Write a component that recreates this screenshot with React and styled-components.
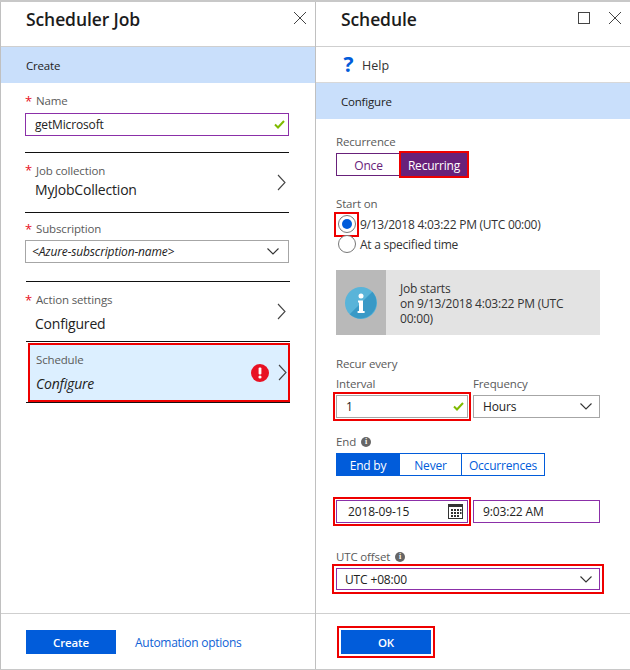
import React from "react";
import styled, { createGlobalStyle } from "styled-components";

const Global = createGlobalStyle`
  html, body { margin: 0; padding: 0; background: #fff; }
  * { box-sizing: border-box; }
  body { font-family: "Open Sans", "Noto Sans", sans-serif; color: #222; }
`;

const Blade = styled.div`
  width: 630px; height: 670px; display: flex; background: #fff;
  border-top: 2px solid #c8c8c8; border-bottom: 1px solid #c8c8c8;
`;
const Panel = styled.section`
  width: 315px; height: 667px; display: flex; flex-direction: column;
  border-left: 1px solid #c0c0c0;
`;
const Header = styled.header`
  height: 45px; flex: none; display: flex; align-items: flex-start; justify-content: space-between;
  border-bottom: 1px solid #cfcfcf; padding: 6px 8px 0 25px;
`;
const Title = styled.h1`
  margin: 0; font-size: 17.5px; line-height: 22px; font-weight: 600; color: #1c1c1c; letter-spacing: -0.1px;
`;
const WindowButtons = styled.div`
  display: flex; gap: 18px; padding-top: 3px; align-items: center;
`;
const CommandBar = styled.div`
  height: 36px; flex: none; display: flex; align-items: center; gap: 8px; padding: 1px 0 0 27px;
  border-bottom: 1px solid #d8d8d8; font-size: 12.5px; color: #333;
`;
const Band = styled.div`
  height: 36px; flex: none; display: flex; align-items: center; padding-left: 25px;
  background: #c9dffb; font-size: 11.5px; letter-spacing: -0.2px; color: #222;
`;
const Body = styled.div`
  flex: 1; padding: ${p => p.$top}px 0 0 ${p => p.$left}px; display: flex; flex-direction: column;
`;
const Footer = styled.footer`
  height: 54px; flex: none; border-top: 1px solid #cfcfcf; display: flex; align-items: center;
  gap: 19px; padding: 2px 0 0 25px; margin-bottom: 2px;
`;

const Label = styled.div`
  height: 16px; font-size: 11.5px; line-height: 16px; color: #5a5a5a; letter-spacing: -0.15px;
  display: flex; align-items: center; white-space: nowrap;
  margin-top: ${p => p.$mt || 0}px;
`;
const Star = styled.span`
  color: #e81123; width: 11px; font-size: 13px; line-height: 16px; flex: none; margin-top: -1px;
`;
const Input = styled.div`
  height: ${p => p.$h || 23}px; width: ${p => p.$w}px; flex: none; display: flex; align-items: center;
  justify-content: space-between; background: #fff;
  border: 1px solid ${p => (p.$purple ? "#8b2fa8" : "#a6a6a6")};
  padding: 0 ${p => p.$pr ?? 3}px 0 ${p => p.$pl ?? 9}px;
  font-size: 12px; letter-spacing: -0.15px; color: #222; white-space: nowrap;
  font-style: ${p => (p.$italic ? "italic" : "normal")};
  margin-top: ${p => p.$mt || 0}px;
  ${p => p.$flag && `outline: 2px solid #ee0000; outline-offset: ${p.$offset ?? 1}px;`}
`;
const Rule = styled.div`
  height: 1px; background: #111; width: 264px; margin-top: ${p => p.$mt}px; flex: none;
  margin-left: ${p => p.$ml || 0}px;
`;
const NavRow = styled.div`
  width: 264px; height: ${p => p.$h}px; flex: none; display: flex; align-items: center; justify-content: space-between;
  padding: 0 3px 0 0;
`;
const NavText = styled.div`
  display: flex; flex-direction: column; gap: ${p => p.$gap}px; margin-top: ${p => p.$mt || 0}px;
`;
const Value = styled.div`
  font-size: 14px; line-height: 18px; color: #222; padding-left: 10px; letter-spacing: -0.2px;
  font-style: ${p => (p.$italic ? "italic" : "normal")};
`;
const ScheduleValue = styled(Value)`
  padding-left: 0;
`;
const ScheduleRow = styled.div`
  width: 262px; height: 59px; margin: 1px 0 0 3px; flex: none; background: #dcefff;
  border: 2px solid #ee0000; display: flex; align-items: center; justify-content: space-between;
  padding: 0 1px 0 6px;
`;
const RowIcons = styled.div`
  display: flex; align-items: center; gap: 9px;
`;
const Primary = styled.button`
  width: 90px; height: 24px; border: 0; background: #015cda; color: #fff; padding: 2px 0 0;
  font: 600 11.5px "Open Sans", sans-serif; letter-spacing: -0.1px; flex: none;
  ${p => p.$flag && `outline: 2px solid #ee0000; outline-offset: 2px;`}
`;
const LinkText = styled.a`
  font-size: 12px; color: #0f62d6; letter-spacing: -0.27px; padding-top: 1px;
`;
const Segments = styled.div`
  display: flex; margin-top: ${p => p.$mt || 0}px; flex: none;
`;
const Segment = styled.div`
  width: ${p => p.$w}px; height: 23px; display: flex; align-items: center; justify-content: center;
  font-size: 12px; letter-spacing: -0.2px; flex: none; padding-top: 1px;
  border: 1px solid ${p => p.$color};
  margin-left: ${p => (p.$join ? -1 : 0)}px;
  background: ${p => (p.$on ? p.$color : "#fff")};
  color: ${p => (p.$on ? "#fff" : p.$color)};
  ${p => p.$flag && `outline: 2px solid #ee0000;`}
`;
const RadioRow = styled.div`
  height: 20px; display: flex; align-items: center; gap: 4px; font-size: 12px; letter-spacing: -0.25px;
  color: #333; white-space: nowrap; padding-left: 1px; flex: none;
  margin-top: ${p => p.$mt || 0}px;
`;
const RadioCell = styled.span`
  width: 19px; height: 19px; display: flex; align-items: center; justify-content: center; flex: none;
  ${p => p.$flag && `outline: 2px solid #ee0000; outline-offset: 1px;`}
`;
const Radio = styled.span`
  width: 18px; height: 18px; border-radius: 50%; border: 1px solid #777; background: #fff;
  display: flex; align-items: center; justify-content: center; flex: none;
`;
const RadioDot = styled.span`
  width: 10px; height: 10px; border-radius: 50%; background: #015cda;
`;
const InfoBox = styled.div`
  width: 264px; height: 65px; margin-top: 16px; background: #e3e3e3; display: flex; flex: none;
`;
const InfoSide = styled.div`
  width: 50px; background: #b9b9b9; display: flex; align-items: center; justify-content: center; flex: none;
`;
const InfoText = styled.div`
  padding: 11px 0 0 14px; width: 200px; font-size: 12px; line-height: 15px; letter-spacing: -0.2px; color: #333;
`;
const Two = styled.div`
  display: flex; gap: 5px; margin-top: ${p => p.$mt || 0}px; flex: none;
`;
const Col = styled.div`
  display: flex; flex-direction: column; gap: 3px;
`;
const Dot = styled.span`
  width: 10px; height: 10px; border-radius: 50%; background: #666; color: #fff; margin-left: 5px;
  font: 700 8px/10px "Liberation Serif", serif; text-align: center; flex: none; letter-spacing: 0;
`;
const Question = styled.span`
  color: #015cda; font-size: 21px; font-weight: 700; line-height: 22px; width: 11px; text-align: center; margin-top: -2px;
`;

const Close = () => (
  <svg width="14" height="14" viewBox="0 0 14 14" fill="none" stroke="#444" strokeWidth="1"><path d="M1 1l12 12M13 1L1 13" /></svg>
);
const Square = () => (
  <svg width="12" height="12" viewBox="0 0 12 12" fill="none" stroke="#444" strokeWidth="1"><rect x=".5" y=".5" width="11" height="11" /></svg>
);
const Check = () => (
  <svg width="11" height="9" viewBox="0 0 11 9" fill="none" stroke="#7fba00" strokeWidth="2"><path d="M1 4.500l3 3 6-6.500" /></svg>
);
const ChevronRight = () => (
  <svg width="9" height="17" viewBox="0 0 9 17" fill="none" stroke="#444" strokeWidth="1.1"><path d="M1 1l7 7.500L1 16" /></svg>
);
const ChevronDown = ({ mr = 5 }) => (
  <svg width="12" height="7" viewBox="0 0 12 7" fill="none" stroke="#333" strokeWidth="1.1" style={{ marginRight: mr }}><path d="M.5.5L6 6 11.5.5" /></svg>
);
const ErrorIcon = () => (
  <svg width="18" height="18" viewBox="0 0 18 18"><circle cx="9" cy="9" r="9" fill="#e81123" /><rect x="7.600" y="3.500" width="2.800" height="7" rx="1" fill="#fff" /><circle cx="9" cy="13" r="1.600" fill="#fff" /></svg>
);
const InfoIcon = () => (
  <svg width="32" height="32" viewBox="0 0 32 32">
    <circle cx="16" cy="16" r="16" fill="#59b4d9" />
    <path d="M27.300 4.700A16 16 0 0 1 4.700 27.300z" fill="#3999c6" />
    <circle cx="16" cy="9" r="2.500" fill="#fff" />
    <path d="M13 13.500h5V24h1.600v2h-7v-2H14v-8.500h-1z" fill="#fff" />
  </svg>
);
const Calendar = () => (
  <svg width="15" height="15" viewBox="0 0 15 15">
    <rect x=".5" y=".5" width="14" height="14" fill="#fff" stroke="#333" />
    <rect x="0" y="0" width="15" height="3" fill="#333" />
    <path d="M3 5h2v2H3zM6 5h2v2H6zM9 5h2v2H9zM12 5h1.500v2H12zM3 8h2v2H3zM6 8h2v2H6zM9 8h2v2H9zM12 8h1.500v2H12zM3 11h2v2H3zM6 11h2v2H6zM9 11h2v2H9z" fill="#333" />
  </svg>
);

export default function App() {
  return (
    <>
      <Global />
      <Blade>
        <Panel>
          <Header>
            <Title>Scheduler Job</Title>
            <WindowButtons><Close /></WindowButtons>
          </Header>
          <Band>Create</Band>
          <Body $top={10} $left={24}>
            <Label><Star>*</Star>Name</Label>
            <Input $w={264} $purple $mt={4}>getMicrosoft<Check /></Input>
            <Rule $mt={16} />
            <NavRow $h={59}>
              <NavText $gap={2} $mt={-4}>
                <Label><Star>*</Star>Job collection</Label>
                <Value>MyJobCollection</Value>
              </NavText>
              <ChevronRight />
            </NavRow>
            <Rule $mt={0} />
            <Label $mt={8}><Star>*</Star>Subscription</Label>
            <Input $w={264} $mt={3} $pl={6} $italic>&lt;Azure-subscription-name&gt;<ChevronDown mr={6} /></Input>
            <Rule $mt={18} $ml={1} />
            <NavRow $h={59}>
              <NavText $gap={7} $mt={2}>
                <Label><Star>*</Star>Action settings</Label>
                <Value>Configured</Value>
              </NavText>
              <ChevronRight />
            </NavRow>
            <Rule $mt={0} $ml={1} />
            <ScheduleRow>
              <NavText $gap={7}>
                <Label>Schedule</Label>
                <ScheduleValue $italic>Configure</ScheduleValue>
              </NavText>
              <RowIcons><ErrorIcon /><ChevronRight /></RowIcons>
            </ScheduleRow>
            <Rule $mt={0} $ml={1} />
          </Body>
          <Footer>
            <Primary>Create</Primary>
            <LinkText>Automation options</LinkText>
          </Footer>
        </Panel>

        <Panel>
          <Header>
            <Title>Schedule</Title>
            <WindowButtons><Square /><Close /></WindowButtons>
          </Header>
          <CommandBar><Question>?</Question>Help</CommandBar>
          <Band>Configure</Band>
          <Body $top={15} $left={20}>
            <Label>Recurrence</Label>
            <Segments $mt={3}>
              <Segment $w={65} $color="#68217a">Once</Segment>
              <Segment $w={66} $color="#68217a" $on $flag>Recurring</Segment>
            </Segments>
            <Label $mt={20}>Start on</Label>
            <RadioRow $mt={2}><RadioCell $flag><Radio><RadioDot /></Radio></RadioCell>9/13/2018 4:03:22 PM (UTC 00:00)</RadioRow>
            <RadioRow><RadioCell><Radio /></RadioCell>At a specified time</RadioRow>
            <InfoBox>
              <InfoSide><InfoIcon /></InfoSide>
              <InfoText>Job starts<br />on 9/13/2018 4:03:22 PM (UTC 00:00)</InfoText>
            </InfoBox>
            <Label $mt={21}>Recur every</Label>
            <Two $mt={4}>
              <Col>
                <Label>Interval</Label>
                <Input $w={132} $flag>1<Check /></Input>
              </Col>
              <Col>
                <Label>Frequency</Label>
                <Input $w={127}>Hours<ChevronDown mr={4} /></Input>
              </Col>
            </Two>
            <Label $mt={16}>End<Dot>i</Dot></Label>
            <Segments $mt={3}>
              <Segment $w={64} $color="#015cda" $on>End by</Segment>
              <Segment $w={63} $color="#015cda" $join>Never</Segment>
              <Segment $w={84} $color="#015cda" $join>Occurrences</Segment>
            </Segments>
            <Two $mt={24}>
              <Input $w={132} $purple $flag $pl={11} $pr={4}>2018-09-15<Calendar /></Input>
              <Input $w={127} $purple>9:03:22 AM</Input>
            </Two>
            <Label $mt={26}>UTC offset<Dot>i</Dot></Label>
            <Input $w={264} $h={22} $purple $flag $offset={2} $mt={3} $pl={8}>UTC +08:00<ChevronDown mr={4} /></Input>
          </Body>
          <Footer>
            <Primary $flag>OK</Primary>
          </Footer>
        </Panel>
      </Blade>
    </>
  );
}
